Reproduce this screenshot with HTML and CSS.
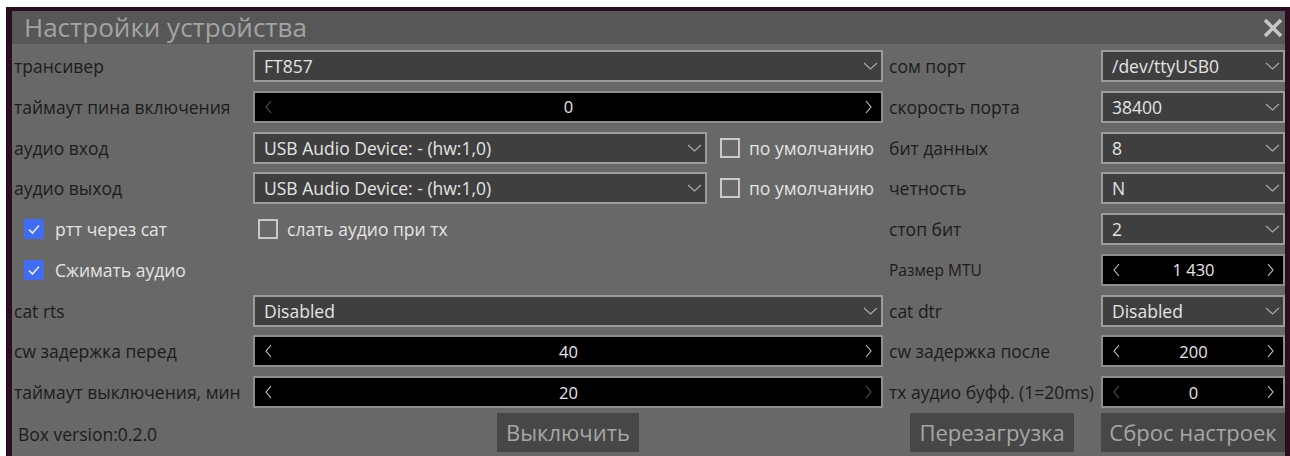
FILE: index.html
```html
<!DOCTYPE html>
<html lang="ru">
<head>
<meta charset="utf-8">
<title>Настройки устройства</title>
<link rel="stylesheet" href="styles.css">
</head>
<body>
<div class="frame">
  <section class="dialog">
    <header class="titlebar">
      <h1 class="title">Настройки устройства</h1>
      <button class="close" type="button" aria-label="Закрыть">
        <svg viewBox="0 0 22 20" width="22" height="20"><path d="M3 2 L19 18 M19 2 L3 18" /></svg>
      </button>
    </header>

    <div class="form">
      <!-- row: transceiver / port -->
      <span class="lbl">трансивер</span>
      <div class="combo"><span class="val">FT857</span><svg class="chev" viewBox="0 0 15 8"><path d="M1 1 L7.5 7 L14 1"/></svg></div>
      <span class="lbl right">сом порт</span>
      <div class="combo"><span class="val">/dev/ttyUSB0</span><svg class="chev" viewBox="0 0 15 8"><path d="M1 1 L7.5 7 L14 1"/></svg></div>

      <!-- row: power pin timeout / baud -->
      <span class="lbl">таймаут пина включения</span>
      <div class="spin"><svg class="arr dim" viewBox="0 0 7 14"><path d="M6 1 L1 7 L6 13"/></svg><span class="num">0</span><svg class="arr" viewBox="0 0 7 14"><path d="M1 1 L6 7 L1 13"/></svg></div>
      <span class="lbl right">скорость порта</span>
      <div class="combo"><span class="val">38400</span><svg class="chev" viewBox="0 0 15 8"><path d="M1 1 L7.5 7 L14 1"/></svg></div>

      <!-- row: audio in / data bits -->
      <span class="lbl">аудио вход</span>
      <div class="pair">
        <div class="combo grow"><span class="val">USB Audio Device: - (hw:1,0)</span><svg class="chev" viewBox="0 0 15 8"><path d="M1 1 L7.5 7 L14 1"/></svg></div>
        <label class="check"><span class="box"></span>по умолчанию</label>
      </div>
      <span class="lbl right">бит данных</span>
      <div class="combo"><span class="val">8</span><svg class="chev" viewBox="0 0 15 8"><path d="M1 1 L7.5 7 L14 1"/></svg></div>

      <!-- row: audio out / parity -->
      <span class="lbl">аудио выход</span>
      <div class="pair">
        <div class="combo grow"><span class="val">USB Audio Device: - (hw:1,0)</span><svg class="chev" viewBox="0 0 15 8"><path d="M1 1 L7.5 7 L14 1"/></svg></div>
        <label class="check"><span class="box"></span>по умолчанию</label>
      </div>
      <span class="lbl right">четность</span>
      <div class="combo"><span class="val">N</span><svg class="chev" viewBox="0 0 15 8"><path d="M1 1 L7.5 7 L14 1"/></svg></div>

      <!-- row: ptt via cat / stop bits -->
      <label class="check indent"><span class="box on"><svg viewBox="0 0 16 16"><path d="M3 8.5 L6.5 12 L13 4.5"/></svg></span>ртт через сат</label>
      <label class="check inner"><span class="box"></span>слать аудио при тх</label>
      <span class="lbl right">стоп бит</span>
      <div class="combo"><span class="val">2</span><svg class="chev" viewBox="0 0 15 8"><path d="M1 1 L7.5 7 L14 1"/></svg></div>

      <!-- row: compress audio / MTU -->
      <label class="check indent"><span class="box on"><svg viewBox="0 0 16 16"><path d="M3 8.5 L6.5 12 L13 4.5"/></svg></span>Сжимать аудио</label>
      <span class="blank"></span>
      <span class="lbl right small">Размер MTU</span>
      <div class="spin"><svg class="arr" viewBox="0 0 7 14"><path d="M6 1 L1 7 L6 13"/></svg><span class="num">1 430</span><svg class="arr" viewBox="0 0 7 14"><path d="M1 1 L6 7 L1 13"/></svg></div>

      <!-- row: cat rts / cat dtr -->
      <span class="lbl">cat rts</span>
      <div class="combo"><span class="val">Disabled</span><svg class="chev" viewBox="0 0 15 8"><path d="M1 1 L7.5 7 L14 1"/></svg></div>
      <span class="lbl right">cat dtr</span>
      <div class="combo"><span class="val">Disabled</span><svg class="chev" viewBox="0 0 15 8"><path d="M1 1 L7.5 7 L14 1"/></svg></div>

      <!-- row: cw delays -->
      <span class="lbl">cw задержка перед</span>
      <div class="spin"><svg class="arr" viewBox="0 0 7 14"><path d="M6 1 L1 7 L6 13"/></svg><span class="num">40</span><svg class="arr" viewBox="0 0 7 14"><path d="M1 1 L6 7 L1 13"/></svg></div>
      <span class="lbl right">cw задержка после</span>
      <div class="spin"><svg class="arr" viewBox="0 0 7 14"><path d="M6 1 L1 7 L6 13"/></svg><span class="num">200</span><svg class="arr" viewBox="0 0 7 14"><path d="M1 1 L6 7 L1 13"/></svg></div>

      <!-- row: shutdown timeout / tx audio buffer -->
      <span class="lbl">таймаут выключения, мин</span>
      <div class="spin"><svg class="arr" viewBox="0 0 7 14"><path d="M6 1 L1 7 L6 13"/></svg><span class="num">20</span><svg class="arr dim" viewBox="0 0 7 14"><path d="M1 1 L6 7 L1 13"/></svg></div>
      <span class="lbl right">тх аудио буфф. (1=20ms)</span>
      <div class="spin"><svg class="arr dim" viewBox="0 0 7 14"><path d="M6 1 L1 7 L6 13"/></svg><span class="num">0</span><svg class="arr" viewBox="0 0 7 14"><path d="M1 1 L6 7 L1 13"/></svg></div>

      <!-- footer: version and actions -->
      <span class="lbl foot version">Box version:0.2.0</span>
      <div class="foot center"><button class="btn" type="button">Выключить</button></div>
      <div class="foot center"><button class="btn" type="button">Перезагрузка</button></div>
      <div class="foot"><button class="btn wide" type="button">Сброс настроек</button></div>
    </div>
  </section>
</div>
</body>
</html>
```

FILE: styles.css
```css
* {
  box-sizing: border-box;
  margin: 0;
  padding: 0;
}

html,
body {
  width: 1290px;
  height: 456px;
  overflow: hidden;
}

body {
  background: #ffffff;
  padding: 7px 0 0 6px;
  font-family: "Open Sans", "Noto Sans", sans-serif;
}

/* dark window frame around the dialog */
.frame {
  background: #2b0d20;
  padding: 4px 5px 0 6px;
  height: 449px;
}

.dialog {
  background: #686868;
  height: 100%;
  display: flex;
  flex-direction: column;
}

.titlebar {
  height: 33px;
  flex: none;
  background: #575757;
  display: flex;
  align-items: center;
  justify-content: space-between;
  padding: 0 1px 0 12px;
}

.title {
  font-size: 26px;
  font-weight: 400;
  color: #a3a3a3;
  line-height: 33px;
}

.close {
  width: 22px;
  height: 20px;
  border: none;
  background: transparent;
  display: flex;
}

.close svg path {
  stroke: #c6c6c6;
  stroke-width: 3.6;
  fill: none;
}

/* settings grid: label | widget | label | widget */
.form {
  display: grid;
  grid-template-columns: 239px 630px 218px 184px;
  grid-template-rows: repeat(9, 32px) 39px;
  row-gap: 8.75px;
  padding: 6px 0 0 2px;
}

.lbl {
  display: flex;
  align-items: center;
  font-size: 17.5px;
  color: #1c1c1c;
  white-space: nowrap;
}

.lbl.right {
  padding-left: 6px;
}

.lbl.small {
  font-size: 15.5px;
}

/* drop-down box */
.combo {
  display: flex;
  align-items: center;
  justify-content: space-between;
  background: #3f3f3f;
  border: 2px solid #9c9c9c;
  padding: 0 3px 0 9px;
  color: #e4e4e4;
  font-size: 17.5px;
  min-width: 0;
}

.combo .val {
  white-space: nowrap;
}

.chev {
  width: 15px;
  height: 8px;
  flex: none;
}

.chev path {
  fill: none;
  stroke: #a8a8a8;
  stroke-width: 1.2;
}

/* number spinner */
.spin {
  display: flex;
  align-items: center;
  justify-content: space-between;
  background: #000000;
  border: 2px solid #8e8e8e;
  padding: 0 9px 0 10px;
  color: #e6e6e6;
  font-size: 16.5px;
}

.arr {
  width: 7px;
  height: 14px;
  flex: none;
}

.arr path {
  fill: none;
  stroke: #c4c4c4;
  stroke-width: 1.1;
}

.arr.dim path {
  stroke: #555555;
}

.num {
  flex: 1;
  text-align: center;
}

/* combo + "default" checkbox */
.pair {
  display: flex;
  align-items: stretch;
}

.pair .combo {
  width: 454px;
  flex: none;
}

.check {
  display: flex;
  align-items: center;
  gap: 9px;
  font-size: 17.5px;
  color: #e4e4e4;
  white-space: nowrap;
}

.pair .check {
  margin-left: 13px;
}

.check.indent {
  padding-left: 10px;
  gap: 11px;
}

.check.inner {
  padding-left: 5px;
}

.box {
  width: 20px;
  height: 20px;
  flex: none;
  border: 2px solid #c9c9c9;
  display: flex;
  align-items: center;
  justify-content: center;
}

.box.on {
  border: none;
  background: #3f6cf2;
}

.box svg {
  width: 16px;
  height: 16px;
}

.box svg path {
  fill: none;
  stroke: #e8ecff;
  stroke-width: 1.6;
}

/* footer row */
.foot {
  margin-top: -4px;
}

.version {
  padding-left: 4px;
}

.center {
  display: flex;
  justify-content: center;
}

.btn {
  height: 39px;
  background: #474747;
  border: none;
  color: #a6a6a6;
  font-family: inherit;
  font-size: 22px;
  padding: 0 9px;
  white-space: nowrap;
}

.btn.wide {
  width: 100%;
  padding: 0 4px;
}
```
